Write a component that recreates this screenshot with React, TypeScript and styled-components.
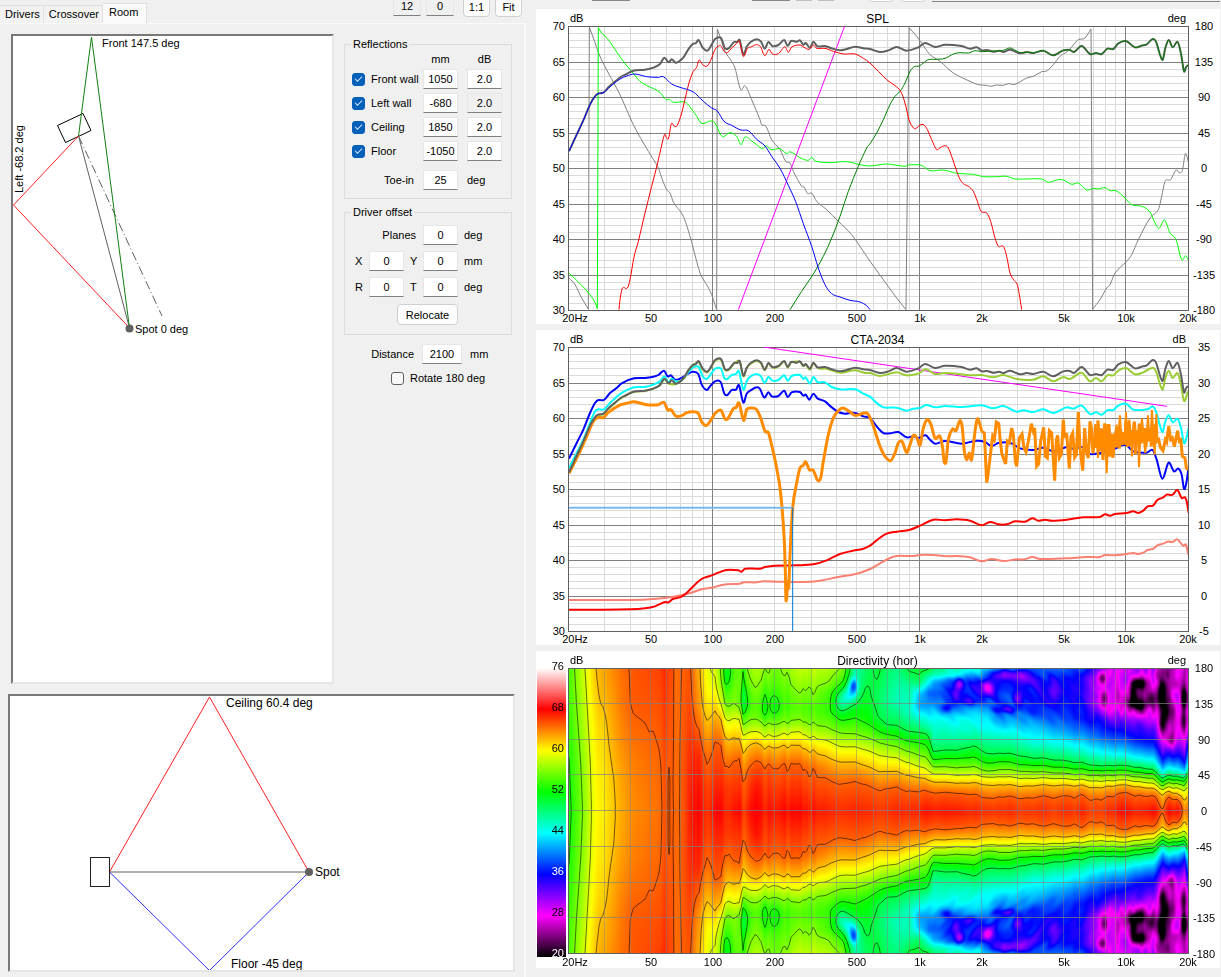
import React, { useLayoutEffect, useMemo, useRef } from "react";
import styled, { createGlobalStyle } from "styled-components";

/* ------------------------------------------------------------------ */
/* Styles                                                              */
/* ------------------------------------------------------------------ */

const GlobalStyle = createGlobalStyle`
  *, *::before, *::after { box-sizing: border-box; }
  body {
    margin: 0;
    background: #f0f0f0;
    color: #000;
    font: 11px/14px "Liberation Sans", Arial, sans-serif;
  }
  input, button { font: inherit; color: inherit; }
`;

const Page = styled.div`
  display: flex;
  align-items: flex-start;
  gap: 10px;
  padding-right: 1px;
`;

const ControlPane = styled.section`
  flex: 0 1 526px;
  min-width: 440px;
`;

const HeaderRow = styled.div`
  display: flex;
  justify-content: space-between;
  height: 23px;
`;

const TabList = styled.div`
  display: flex;
  align-items: flex-end;
`;

const Tab = styled.button<{ $active?: boolean }>`
  height: ${(p) => (p.$active ? 21 : 18)}px;
  padding: ${(p) => (p.$active ? "0 8px 4px 6px" : "0 3px 2px 5px")};
  margin-bottom: ${(p) => (p.$active ? -1 : 0)}px;
  border: 1px solid #e0e0e0;
  border-bottom: 0;
  border-left-width: 0;
  background: ${(p) => (p.$active ? "#fafafa" : "#f2f2f2")};
`;

const ZoomTools = styled.div`
  display: flex;
  align-items: flex-start;
  margin-top: -4px;
  padding-right: 4px;
  overflow: hidden;
`;

const ToolPair = styled.div`
  display: flex;
  gap: 5px;
  margin-left: 9px;
`;

const Field = styled.input<{ $width?: number; $muted?: boolean }>`
  width: ${(p) => p.$width ?? 35}px;
  height: 20px;
  padding: 0;
  text-align: center;
  border: 1px solid #e6e6e6;
  border-bottom-color: #808080;
  border-radius: 0;
  background: ${(p) => (p.$muted ? "#f0f0f0" : "#fff")};
`;

const PushButton = styled.button<{ $width: number }>`
  width: ${(p) => p.$width}px;
  height: 21px;
  padding: 0;
  border: 1px solid #d0d0d0;
  border-radius: 4px;
  background: #fdfdfd;
`;

const TabPanel = styled.div`
  padding: 10px 9px 5px 8px;
  border-top: 1px solid #fafafa;
  border-right: 2px solid #fafafa;
`;

const RoomRow = styled.div`
  display: flex;
  align-items: flex-start;
  gap: 10px;
  padding: 0 3px 10px;
`;

const Frame = styled.div`
  flex: 1;
  min-width: 0;
  border: 2px solid;
  border-color: #787878 #e6e6e6 #e6e6e6 #787878;
  background: #fff;
`;

const Drawing = styled.svg`
  display: block;
  width: 100%;
  height: auto;
  font-family: "Liberation Sans", Arial, sans-serif;
`;

const Settings = styled.form`
  flex: 0 0 168px;
  padding-top: 3px;
`;

const Group = styled.fieldset`
  margin: 0 0 6px;
  padding: 0 0 6px 7px;
  border: 1px solid #dcdcdc;
`;

const GroupTitle = styled.legend`
  margin-left: -1px;
  padding: 0 2px;
`;

const WallRow = styled.div`
  display: grid;
  grid-template-columns: 62px 35px 35px;
  column-gap: 9px;
  align-items: center;
  height: 24px;
`;

const WallHeader = styled(WallRow)`
  height: 16px;
  text-align: center;
`;

const ToeRow = styled(WallRow)`
  margin-top: 5px;
`;

const RightLabel = styled.label`
  text-align: right;
`;

const CheckLabel = styled.label`
  display: flex;
  align-items: center;
  gap: 6px;
  white-space: nowrap;
`;

const CheckBox = styled.input`
  appearance: none;
  display: grid;
  place-items: center;
  flex: none;
  width: 13px;
  height: 13px;
  margin: 0;
  border: 1px solid #606060;
  border-radius: 3px;
  background: #f8f8f8;
  &:checked {
    border-color: #005fb8;
    background: #005fb8;
  }
  &:checked::after {
    content: "";
    width: 7px;
    height: 4px;
    margin-top: -2px;
    border: solid #d0e4f8;
    border-width: 0 0 1px 1px;
    transform: rotate(-45deg);
  }
`;

const OffsetRow = styled.div`
  display: grid;
  grid-template-columns: 17px 35px 19px 35px auto;
  align-items: center;
  height: 26px;
`;

const OffsetLabel = styled.label`
  padding-left: 3px;
`;

const AxisLabel = styled.label`
  padding-left: 6px;
`;

const PlanesLabel = styled(RightLabel)`
  grid-column: span 3;
  padding-right: 7px;
`;

const Unit = styled.span`
  padding-left: 6px;
`;

const OffsetBody = styled.div`
  padding: 3px 0;
`;

const ButtonLine = styled.div`
  padding: 4px 0 0 45px;
`;

const DistanceRow = styled.div`
  display: grid;
  grid-template-columns: 70px 40px auto;
  column-gap: 8px;
  align-items: center;
  margin-top: 9px;
`;

const RotateRow = styled.div`
  padding: 7px 0 0 47px;
`;

const ChartPane = styled.main`
  flex: 1;
  min-width: 0;
  display: flex;
  flex-direction: column;
  gap: 6px;
`;

const ToolbarEdge = styled.div`
  display: flex;
  align-items: flex-start;
  gap: 6px;
  height: 3px;
  overflow: hidden;
  padding-left: 56px;
`;

const EdgeLine = styled.span<{ $width: number; $light?: boolean }>`
  flex: 0 0 ${(p) => p.$width}px;
  height: 1px;
  background: ${(p) => (p.$light ? "#c0c0c0" : "#888")};
`;

const EdgeSpace = styled.span<{ $width: number }>`
  flex: 0 0 ${(p) => p.$width}px;
`;

const EdgeButton = styled.span`
  flex: 0 0 26px;
  height: 12px;
  margin-top: -10px;
  border: 1px solid #d0d0d0;
  border-radius: 4px;
  background: #fdfdfd;
`;

const EdgeRule = styled(EdgeLine)`
  flex: 1;
  margin-top: 1px;
`;

const ChartCard = styled.figure`
  margin: 0;
  background: #fff;
`;

const HeatCanvas = styled.canvas`
  display: block;
  width: 100%;
  height: 100%;
`;

/* ------------------------------------------------------------------ */
/* Traces. A plot is 1857 x 852 trace units; the left edge is x = 117. */
/* Each trace has a low band and a high band that starts at x = 1020.  */
/* ------------------------------------------------------------------ */

type Pt = [number, number];

const X0 = 117;
const HIGH = 1020;

const parse = (s: string, dx = 0): Pt[] =>
  s
    .trim()
    .split(/\s+/)
    .filter(Boolean)
    .map((p) => {
      const [x, y] = p.split(",").map(Number);
      return [x + dx, y] as Pt;
    });

const trace = (low: string, high = ""): Pt[] => [...parse(low), ...parse(high, HIGH)];

const smooth = (pts: Pt[]): string => {
  let d = `M${pts[0][0]},${pts[0][1]}`;
  for (let i = 0; i < pts.length - 1; i++) {
    const a = pts[Math.max(0, i - 1)];
    const b = pts[i];
    const c = pts[i + 1];
    const e = pts[Math.min(pts.length - 1, i + 2)];
    const k = (c[0] - b[0]) / 3;
    const mb = c[0] === a[0] ? 0 : (c[1] - a[1]) / (c[0] - a[0]);
    const mc = e[0] === b[0] ? 0 : (e[1] - b[1]) / (e[0] - b[0]);
    d += `C${(b[0] + k).toFixed(1)},${(b[1] + mb * k).toFixed(1)} ${(c[0] - k).toFixed(1)},${(c[1] - mc * k).toFixed(1)} ${c[0]},${c[1]}`;
  }
  return d;
};

const sharp = (pts: Pt[]): string => "M" + pts.map((p) => p.join(",")).join("L");

const TOTAL = trace(
  "117,455 140,405 160,362 180,315 192,294 204,282 220,279 235,263 250,250 272,232 290,223 310,213 345,210 370,204 390,193 403,174 416,188 425,179 437,189 450,183 462,171 475,149 488,133 498,130 506,121 518,144 532,153 545,135 555,118 573,115 585,146 597,145 612,127 622,127 629,121 640,165 650,141 662,127 680,119 693,126 704,147 715,127 727,139 745,136 763,121 773,139 783,124 800,126 810,122 820,135 827,130 840,144 850,126 862,140 885,139 905,146 930,152 950,148 975,141 1000,146",
  "0,148 30,157 55,152 80,142 110,153 145,143 165,130 195,142 225,135 275,139 300,147 320,143 335,152 350,151 370,156 388,153 400,157 420,150 450,161 470,157 490,160 520,153 550,167 580,152 600,151 612,157 635,139 660,163 678,160 695,163 712,147 730,148 745,131 768,124 795,143 815,138 830,134 848,118 858,126 877,181 886,145 896,121 908,143 923,127 933,162 942,215 948,203 954,196"
);

const WOOFER = trace(
  "117,455 140,405 160,362 180,315 192,294 204,282 220,279 235,266 250,253 270,238 290,229 315,223 350,231 385,233 400,231 425,253 450,263 490,277 520,305 545,325 562,334 582,365 605,377 632,391 655,393 680,419 705,439 725,470 750,506 775,557 797,606 820,672 845,740 865,805 885,855 905,882 930,892 960,902 990,907 1010,918 1020,930"
);

const MID = trace(
  "267,930 270,900 277,866 292,865 300,840 312,772 325,725 345,640 365,560 383,490 393,445 404,404 410,416 416,415 424,372 433,380 442,377 455,340 468,285 480,240 490,215 500,203 507,181 518,195 532,199 545,175 556,148 572,138 582,155 592,159 605,145 618,133 628,124 634,150 641,171 652,147 665,141 680,135 692,142 704,168 717,149 727,163 745,162 765,141 775,158 785,142 810,136 822,143 838,149 850,136 860,146 885,146 910,155 940,163 975,163 1000,176",
  "0,190 25,215 50,240 75,258 92,275 105,310 117,360 128,382 137,387 150,376 162,376 172,390 185,420 200,450 210,444 225,438 235,445 245,470 257,505 268,535 280,552 295,560 310,575 322,605 333,635 350,640 362,665 375,715 385,740 400,740 410,770 420,820 432,842 442,855 448,885 455,930"
);

const TWEETER = trace(
  "780,930 815,875 850,823 880,770 905,715 930,650 955,575 985,500 1010,445",
  "0,432 20,400 40,360 60,315 75,290 90,275 105,250 120,215 133,201 148,199 160,190 175,180 195,179 225,176 250,163 270,159 295,160 315,153 335,156 370,154 400,152 420,145 438,153 450,159 470,157 490,160 520,153 550,167 580,152 600,151 612,157 635,139 660,163 678,160 695,163 712,147 730,148 745,131 768,124 795,143 815,138 830,134 848,118 858,126 877,181 886,145 896,121 908,143 923,127 933,162 942,215 948,203 954,196"
);

const GREEN_PHASE = [
  trace("117,820 140,842 160,862 180,885 195,908 202,927"),
  trace(
    "205,84 215,100 235,120 260,157 285,192 305,215 330,245 360,262 390,278 408,300 418,299 430,308 465,307 480,322 500,350 513,370 525,370 540,364 555,370 570,402 580,411 600,399 620,410 633,435 645,412 665,424 680,435 697,447 710,438 722,450 750,447 770,462 780,456 812,475 835,482 845,473 855,484 900,489 950,486 990,495",
    "0,499 50,493 105,500 115,496 155,497 180,513 220,511 260,521 310,524 340,531 380,531 410,530 435,538 515,538 535,548 560,541 580,541 605,554 625,550 650,571 670,566 685,568 705,564 720,573 738,573 765,595 785,615 815,620 840,637 855,670 867,686 884,661 900,700 918,720 935,780 947,768 955,781"
  ),
];

const GREY_PHASE = [
  trace("117,835 135,855 155,895 175,928"),
  trace(
    "178,82 190,115 210,170 235,220 270,285 310,375 355,455 385,505 397,540 410,570 420,580 430,607 460,650 480,710 500,785 512,825 530,855 545,885 555,915 560,930"
  ),
  trace(
    "562,88 575,125 585,155 605,185 615,205 632,270 645,258 665,300 690,360 695,375 708,380 725,420 750,450 767,485 780,490 790,515 815,560 822,562 833,582 845,580 860,605 890,630 925,665 965,705 1010,770",
    "0,785 40,840 80,895 108,930"
  ),
  trace(
    "",
    "117,84 140,110 165,145 180,165 210,185 250,220 300,245 325,255 350,257 362,260 380,256 400,257 415,252 435,254 470,235 490,230 515,216 530,214 550,195 570,170 585,160 600,148 615,130 625,120 645,115 663,88"
  ),
  trace(
    "",
    "668,928 690,900 710,865 720,855 735,820 770,785 785,765 805,720 840,655 865,630 875,590 885,545 895,541 902,540 918,511 926,518 937,513 946,462 955,485"
  ),
];

const LISTENING = trace(
  "117,445 140,395 160,352 180,305 192,284 204,271 220,269 235,253 272,221 310,202 345,199 390,182 403,163 416,177 437,178 462,160 475,137 488,123 506,112 518,134 532,143 545,125 555,108 573,105 585,136 597,135 612,117 629,111 640,155 650,131 662,117 680,109 693,116 704,137 715,117 727,129 745,126 763,111 773,129 783,114 810,112 820,125 827,120 840,135 850,117 865,131 890,132 930,144 975,137 1005,145",
  "0,145 30,154 80,143 110,152 145,147 168,134 195,148 225,145 275,149 300,152 335,151 370,158 400,151 440,163 490,165 520,155 550,170 580,157 600,163 635,144 660,170 678,160 695,170 712,152 730,152 745,138 768,130 795,149 820,143 848,129 858,140 877,195 886,160 896,138 908,160 923,146 933,180 942,229 954,200"
);

const EARLY = trace(
  "117,430 140,385 160,345 180,295 195,260 205,254 222,254 240,235 272,207 312,188 345,187 370,180 390,170 403,155 415,172 425,163 437,170 450,170 462,160 475,143 490,128 506,127 518,155 530,163 545,145 555,132 573,132 583,160 592,163 605,151 618,148 627,140 640,195 650,170 662,155 680,148 693,155 704,175 715,157 727,168 745,166 763,152 773,168 785,154 810,151 820,163 827,158 840,177 850,157 862,172 885,173 905,187 930,194 975,194 1000,207",
  "0,216 20,235 40,248 80,249 110,258 130,252 150,250 168,241 195,248 225,244 275,247 335,242 370,251 400,244 440,261 460,257 490,262 520,254 550,265 590,248 610,252 635,243 660,268 678,263 695,270 712,257 730,256 745,243 768,237 790,255 835,253 848,245 858,260 877,322 886,290 896,272 908,293 923,283 933,310 942,355 948,345 956,310"
);

const POWER = trace(
  "117,402 140,355 160,315 180,265 195,235 205,226 222,226 240,205 260,190 275,176 312,161 345,160 370,156 385,151 402,138 413,155 423,152 435,165 450,162 475,147 488,141 505,148 515,180 530,196 540,185 555,170 572,172 583,207 592,211 605,196 618,195 627,182 640,234 650,207 662,197 680,188 690,193 703,219 715,203 725,215 745,214 763,198 773,217 785,203 810,202 820,213 827,210 838,225 850,207 862,221 885,230 905,248 925,262 945,267 965,264 980,266 1000,275",
  "0,280 20,305 40,325 60,326 85,322 110,338 130,335 145,340 167,332 180,345 195,357 225,349 275,357 320,348 345,352 365,364 385,355 420,354 450,371 490,376 520,369 550,380 590,367 610,372 640,368 655,387 690,385 712,378 740,370 755,362 770,362 790,380 830,384 848,376 860,405 877,462 896,414 912,440 925,432 935,450 942,492 948,480 955,435"
);

const hash = (n: number): number => {
  const s = Math.sin(n * 127.1 + 11.7) * 43758.5453;
  return s - Math.floor(s);
};

/* Above 6 kHz the comb filtering is denser than the plot can resolve. */
const combPoints = (): Pt[] => {
  const pts: Pt[] = [];
  let up = true;
  let i = 0;
  for (let x = 664; x < 864; x += x < 740 ? 5 : 4) {
    const mid = 354 - (x - 664) * 0.12;
    const swing = 16 + 56 * hash(i) * hash(i + 500);
    pts.push([x + HIGH, Math.round(mid + (up ? -swing : swing))]);
    up = !up;
    i++;
  }
  return pts;
};

const ROOM_RESPONSE_LOW = trace(
  "117,446 150,380 170,335 190,290 204,278 220,279 235,263 272,240 290,236 312,231 350,240 385,240 402,233 413,256 423,255 437,274 455,273 470,264 487,261 505,266 515,292 530,302 548,278 555,266 573,257 585,283 595,280 610,252 618,249 627,235 641,287 650,255 665,250 680,255 692,280 705,320 715,324 727,370 740,430 750,490 757,560 763,650 766,740 768,828 774,770 776,790 780,690 788,550 800,475 810,430 820,422 827,411 838,435 850,437 863,467 872,460 880,410 895,330 910,280 925,258 938,250 955,258 975,272 1000,266 1012,266",
  "5,290 15,320 30,365 45,395 62,408 75,385 85,355 97,352 110,384 120,360 130,332 142,342 150,362 160,310 172,285 183,300 195,340 210,335 218,370 222,410 228,410 235,345 248,313 258,318 270,288 277,310 283,380 290,405 298,385 305,405 315,320 322,283 330,300 335,320"
);

const ROOM_RESPONSE_HIGH: Pt[] = [
  ...trace(
    "",
    "335,320 343,325 350,474 354,450 360,400 368,335 373,345 379,292 386,296 391,350 396,390 407,418 412,350 418,355 425,310 430,330 436,410 440,425 448,340 456,328 462,370 468,382 475,350 484,297 490,320 494,310 500,425 506,418 512,350 521,308 526,395 532,400 538,318 545,325 549,390 554,468 559,345 563,332 568,400 574,390 580,285 584,340 590,325 598,432 603,335 608,325 614,398 619,390 625,262 630,370 638,438 644,310 649,380 655,400 660,290"
  ),
  ...combPoints(),
  ...trace(
    "",
    "866,345 872,370 879,378 886,345 890,352 896,305 902,345 907,340 913,366 918,340 923,318 928,355 932,340 937,395 945,400 949,430 954,435"
  ),
];

const COMB_PEAKS = sharp(
  trace(
    "",
    "672,345 676,298 680,345 684,400 688,345 706,345 710,446 714,345 718,298 722,345 728,400 732,345 740,300 744,345 750,272 753,330 765,330 768,262 771,330 778,285 782,330 786,395 789,330 794,290 798,330 804,330 807,428 811,330 816,282 820,330 826,385 830,330 834,272 837,330 842,330 846,256 850,330 854,390 856,330 859,268 862,340"
  )
);

const DI_RED = trace(
  "117,855 190,855 300,854 345,851 375,845 405,832 415,833 428,823 455,816 475,800 500,775 515,763 530,757 545,752 565,744 590,736 625,737 635,741 645,732 690,732 705,727 735,723 800,722 850,719 890,707 930,688 965,679 1000,672",
  "0,663 25,643 50,627 80,621 120,615 150,603 190,585 225,587 260,584 300,588 335,602 360,592 385,599 410,599 435,590 465,591 487,581 505,588 525,585 545,588 590,585 640,578 690,577 705,569 720,573 735,568 770,565 790,560 805,565 820,558 832,546 850,542 862,526 880,518 890,510 908,510 922,496 935,520 945,518 950,530 956,565"
);

const DI_SALMON = trace(
  "117,826 300,826 380,822 430,816 470,808 515,794 550,788 580,780 630,777 642,773 680,773 700,770 740,771 820,772 870,768 920,758 980,747",
  "0,733 30,716 60,700 80,694 130,694 160,690 190,691 230,695 260,694 300,698 335,710 365,703 400,709 440,704 465,704 487,697 510,703 590,701 650,697 690,697 705,691 730,692 770,688 790,685 805,688 822,683 832,676 850,672 862,662 880,657 892,651 908,652 922,644 940,664 948,660 955,690"
);

/* ------------------------------------------------------------------ */
/* Shared plot geometry                                                */
/* ------------------------------------------------------------------ */

const CARD_W = 684;
const PLOT_X = 33;
const PLOT_Y = 17;
const PLOT_W = 619;
const PLOT_H = 284;
const HEAT_H = 286;

const freqX = (f: number) => Math.round((Math.log10(f / 20) / 3) * PLOT_W);

const MINOR_FREQS = [
  30, 40, 50, 60, 70, 80, 90, 200, 300, 400, 500, 600, 700, 800, 900, 2000, 3000, 4000, 5000, 6000, 7000, 8000, 9000,
];
const MAJOR_FREQS = [100, 1000, 10000];
const FREQ_TICKS: [number, string][] = [
  [50, "50"],
  [100, "100"],
  [200, "200"],
  [500, "500"],
  [1000, "1k"],
  [2000, "2k"],
  [5000, "5k"],
  [10000, "10k"],
  [20000, "20k"],
];

const FreqLabels = ({ y }: { y: number }) => (
  <g fontSize="11" textAnchor="middle">
    <text x={PLOT_X + 6} y={y}>20Hz</text>
    {FREQ_TICKS.map(([f, label]) => (
      <text key={f} x={PLOT_X + freqX(f)} y={y}>{label}</text>
    ))}
  </g>
);

const Caption = ({ title, right }: { title: string; right: string }) => (
  <g fontSize="11">
    <text x={PLOT_X + 1} y="13">dB</text>
    <text x={PLOT_X + PLOT_W / 2 - 1} y="14" fontSize="12" textAnchor="middle">{title}</text>
    <text x={PLOT_X + PLOT_W - 2} y="13" textAnchor="end">{right}</text>
  </g>
);

const Grid = () => {
  const rows = Array.from({ length: 41 }, (_, i) => i);
  const rowY = (i: number) => Math.round((i * PLOT_H) / 40) + 0.5;
  return (
    <g strokeWidth="1" shapeRendering="crispEdges" transform={`translate(${PLOT_X} ${PLOT_Y})`}>
      <g stroke="#dadada">
        {rows.filter((i) => i % 5).map((i) => <path key={i} d={`M0,${rowY(i)}H${PLOT_W}`} />)}
        {MINOR_FREQS.map((f) => <path key={f} d={`M${freqX(f) - 0.5},0V${PLOT_H}`} />)}
      </g>
      <g stroke="#808080">
        {rows.filter((i) => i % 5 === 0).map((i) => <path key={i} d={`M0,${rowY(i)}H${PLOT_W}`} />)}
        {MAJOR_FREQS.map((f) => <path key={f} d={`M${freqX(f) - 0.5},0V${PLOT_H}`} />)}
      </g>
      <rect x="-0.5" y="0.5" width={PLOT_W + 1} height={PLOT_H} fill="none" stroke="#606060" />
    </g>
  );
};

interface CurveProps {
  d: string;
  color: string;
  width?: number;
}

const Curve = ({ d, color, width = 1 }: CurveProps) => (
  <path d={d} fill="none" stroke={color} strokeWidth={width} vectorEffect="non-scaling-stroke" />
);

interface LineChartProps {
  title: string;
  unit: string;
  ticks: number[];
  originY: number;
  children: React.ReactNode;
}

const LineChart = ({ title, unit, ticks, originY, children }: LineChartProps) => (
  <ChartCard>
    <Drawing viewBox={`0 0 ${CARD_W} 315`} role="img" aria-label={title}>
      <Grid />
      <svg x={PLOT_X} y={PLOT_Y} width={PLOT_W} height={PLOT_H} viewBox={`${X0} ${originY} 1857 852`} preserveAspectRatio="none">
        {children}
      </svg>
      <Caption title={title} right={unit} />
      <g fontSize="11">
        {ticks.map((t, i) => {
          const y = PLOT_Y + Math.round((i * PLOT_H) / 8) + 4;
          return (
            <React.Fragment key={t}>
              <text x="29" y={y} textAnchor="end">{70 - i * 5}</text>
              <text x="668" y={y} textAnchor="middle">{t}</text>
            </React.Fragment>
          );
        })}
      </g>
      <FreqLabels y={313} />
    </Drawing>
  </ChartCard>
);

/* ------------------------------------------------------------------ */
/* Directivity map                                                     */
/* ------------------------------------------------------------------ */

/* Polar samples: plot x, then angle:level pairs. */
const POLAR: [number, string][] = [
  [0, "0:52.4 60:52.9 90:53.3 135:54 180:54.4"],
  [14, "0:56.1 60:56.6 120:57.5 180:58.4"],
  [24, "0:59.4 60:59.7 110:60.3 135:60.7 180:61.3"],
  [33, "0:60.4 60:60.8 110:61.4 135:62.1 180:62.7"],
  [45, "0:61.8 40:62 80:62.6 135:63.3 180:63.8"],
  [60, "0:63.3 60:63.7 110:64.5 135:64.9 180:65"],
  [80, "0:64.2 60:64.6 100:65 130:65.4 180:65.8"],
  [93, "0:65 60:65.2 130:65.9 180:66.4"],
  [100, "0:64.9 40:64.9 70:65.1 130:65.5 180:65.9"],
  [106, "0:64.8 40:64.7 90:64.7 180:64.6"],
  [113, "0:65.3 60:65.3 120:65.2 180:65.1"],
  [120, "0:67 60:66.6 110:66 150:65.6 180:65.4"],
  [129, "0:68 70:66.8 105:65 130:63.6 180:62.6"],
  [136, "0:66.7 30:66.3 69:65 120:62 150:60.6 180:60.2"],
  [146, "0:67.9 88:65 126:62 155:59.6 180:58.6"],
  [151, "0:68 85:65 118:62 137:59 160:57 180:56.4"],
  [157, "0:66.8 30:66.4 58:65 92:62 115:59 132:56 160:53 180:52"],
  [166, "0:67.6 64:65 92:62 117:59 135:56 180:54.8"],
  [171, "0:67.8 66:65 90:62 116:59 134:56 180:54.8"],
  [174, "0:66 30:65.2 38:65 73:62 96:59 109:56 125:53 145:51.8 180:53.2"],
  [178, "0:67 50:65 80:62 98:59 112:56 130:54 150:54.5 180:56"],
  [186, "0:68.1 30:67.4 63:65 86:62 100:59 115:56 130:54.6 150:55.7 180:57.4"],
  [196, "0:66.8 54:65 78:62 93:59 107:56 122:53.2 145:53 165:55 180:56"],
  [206, "0:67.4 54:65 80:62 94:59 109:56 125:53.2 142:53.2 160:54.5 180:55.4"],
  [216, "0:67.9 60:65 83:62 98:59 112:56 130:54.2 150:54.8 180:56.6"],
  [228, "0:67.9 60:65 83:62 100:59 114:56 130:54.6 151:56 180:58"],
  [245, "0:67.6 54:65 77:62 94:59 111:56 130:54.6 146:56 180:58.4"],
  [260, "0:67 40:65 67:62 88:59 104:56 125:53.4 150:54 163:56 180:57.5"],
  [273, "0:66.7 35:65 62:62 81:59 98:56 114:53 128:50.6 145:50.4 165:54 180:56"],
  [286, "0:67 38:65 62:62 81:59 97:56 117:53 140:50 160:47.5 180:46.5"],
  [297, "0:66.8 34:65 57:62 77:59 93:56 113:52.6 140:50.8 180:49"],
  [309, "0:66.4 27:65 50:62 71:59 87:56 101:53 118:50 145:49 165:50 180:50.6"],
  [317, "0:66.6 29:65 50:62 69:59 84:56 97:53 108:50 140:47.6 180:49"],
  [328, "0:67 31:65 50:62 67:59 81:56 94:53 107:50 140:46 180:48"],
  [340, "0:67 26:65 45:62 61:59 75:56 88:53 100:50 125:46 155:47 180:50.6"],
  [350, "0:67 25:65 42:62 56:59 70:56 86:53 99:50 115:46 133:41 148:42 163:49 180:51"],
  [359, "0:67.6 25:65 39:62 51:59 65:56 80:53 96:50 108:46 118:44 135:40 150:39 163:44 180:50.4"],
  [364, "0:67.4 24:65 37:62 47:59 56:56 65:53 75:50 92:47 115:44.6 135:40 150:38 163:41 172:46 180:49"],
  [388, "0:67.3 23:65 35:62 45:59 54:56 66:53 76:50 92:47 117:44 130:40 150:36 165:36 172:43 180:46"],
  [404, "0:67 22:65 36:62 46:59 56:56 68:53 82:50 100:46 117:44.5 130:41 147:36 160:36 170:42 180:44"],
  [418, "0:66.7 17:65 33:62 43:59 50:56 60:53 72:50 96:46 121:42.5 138:38 157:34 172:38 180:43"],
  [434, "0:66.6 18:65 33:62 43:59 52:56 62:53 72:50 100:44.6 117:40.6 130:37 147:38 163:36 171:29 176:33 180:40"],
  [451, "0:66.3 16:65 31:62 41:59 50:56 58:53 69:50 88:46 109:41.8 125:39 142:35 155:37 170:30 176:34 180:41"],
  [465, "0:66.5 17:65 32:62 41:59 49:56 57:53 66:50 86:45 105:42 125:38 145:37 165:34 180:40"],
  [484, "0:66.2 17:65 32:62 41:59 48:56 55:53 64:50 84:45 100:41.6 117:38.6 134:36 150:35 165:36 180:39.5"],
  [511, "0:67 21:65 33:62 40:59 46:56 53:53 61:50 79:45 98:40.5 117:36.8 148:35.5 168:36 180:38.5"],
  [528, "0:66.3 16:65 30:62 38:59 45:56 51:53 57:50 73:45 94:39.6 113:36 130:31.5 147:31 168:31 180:34"],
  [541, "0:66.9 19:65 32:62 38:59 45:56 51:53 57:50 72:44.4 92:38.6 113:34 125:29 145:27 160:29 180:27"],
  [558, "0:67.8 24:65 33:62 39:59 45:56 51:53 57:50 71:44 92:37.6 111:33 123:29 142:27 163:30 180:30"],
  [570, "0:67.2 21:65 31:62 37:59 43:56 49:53 55:50 68:44 88:37 105:34 122:28 140:25 148:26 160:25 172:29 180:31"],
  [584, "0:68 20:65 29:62 35:59 41:56 47:53 52:50 65:44 84:37 104:33 122:28 140:25 165:28 180:30"],
  [593, "0:65.2 20:62 27:59 31:56 36:53 41:50 50:44 62:38 75:33 92:28 111:26 125:24 150:23 168:26 180:25"],
  [603, "0:67.6 16:65 23:62 29:59 35:56 39:53 44:50 54:44 69:36 84:30 96:26 117:25 147:27 165:28 180:27"],
  [610, "0:67.4 13:65 20:62 28:59 34:56 38:53 43:50 53:43 69:36 88:30 117:28 150:28 180:27"],
  [615, "0:64 12:62 25:59 31:56 37:53 41:50 50:43 62:36 80:30 100:26 125:24 150:24 168:26 180:26"],
  [619, "0:65 20:62 33:59 41:56 46:53 50:50 62:44 80:38 98:31 125:27 180:28"],
];

/* Local notches: x, angle, depth in dB, width in px, width in degrees. */
const NOTCHES: [number, number, number, number, number][] = [
  [284, 158, 9, 3, 7],
  [280, 147, 5, 5, 8],
  [272, 138, 3, 5, 8],
  [157, 172, 1, 4, 8],
  [175, 140, 2, 4, 12],
  [195, 130, 1, 3, 9],
  [206, 133, 1, 4, 9],
  [390, 160, 7, 3, 5],
  [386, 145, 4, 3, 7],
  [377, 130, 5, 4, 4],
  [400, 138, 3, 8, 3],
  [418, 155, 6, 4, 7],
  [436, 128, 4, 8, 3],
  [448, 142, 4, 3, 7],
  [484, 150, 3, 4, 10],
  [533, 168, 7, 3, 6],
  [534, 140, 5, 3, 8],
  [545, 130, 2, 4, 5],
  [562, 136, 5, 4, 5],
  [570, 133, 6, 5, 5],
  [563, 150, 6, 3, 9],
  [568, 162, 6, 5, 4],
  [573, 160, 3, 2, 6],
  [581, 142, 5, 3, 8],
  [593, 150, 6, 4, 12],
  [596, 125, 6, 4, 12],
  [593, 108, 4, 3, 8],
  [601, 88, 5, 3, 6],
  [588, 172, 3, 3, 6],
  [598, 173, 3, 2, 6],
  [614, 140, 6, 2, 14],
  [613, 112, 4, 2, 8],
];

const toPlot = (pts: Pt[]): Pt[] => pts.map(([x, y]) => [(x - X0) / 3, 70 - (y - 79) / 21.3]);

const lerpTable = (pts: Pt[], x: number): number => {
  if (x <= pts[0][0]) return pts[0][1];
  for (let i = 1; i < pts.length; i++) {
    if (x <= pts[i][0]) {
      const [ax, ay] = pts[i - 1];
      const [bx, by] = pts[i];
      return ay + ((by - ay) * (x - ax)) / (bx - ax);
    }
  }
  return pts[pts.length - 1][1];
};

const valueNoise = (x: number, y: number): number => {
  const xi = Math.floor(x);
  const yi = Math.floor(y);
  const fx = x - xi;
  const fy = y - yi;
  const sx = fx * fx * (3 - 2 * fx);
  const sy = fy * fy * (3 - 2 * fy);
  const h = (a: number, b: number) => hash(a * 1.37 + b * 31.7);
  const top = h(xi, yi) * (1 - sx) + h(xi + 1, yi) * sx;
  const bottom = h(xi, yi + 1) * (1 - sx) + h(xi + 1, yi + 1) * sx;
  return (top * (1 - sy) + bottom * sy) * 2 - 1;
};

const ramp = (x: number, a: number, b: number) => {
  const t = Math.min(1, Math.max(0, (x - a) / (b - a)));
  return t * t * (3 - 2 * t);
};

/* Level in dB for every plot pixel of the 0..180 degree half. */
const buildField = (): number[][] => {
  const onAxis = toPlot(TOTAL);
  const drops = POLAR.map(([x, pairs]) => {
    const table = pairs.split(" ").map((p) => p.split(":").map(Number) as Pt);
    const axis = lerpTable(onAxis, x);
    const raw = Array.from({ length: 181 }, (_, a) => axis - lerpTable(table, a));
    raw[0] = 0;
    return raw.map((_, a) => {
      let sum = 0;
      for (let k = -3; k <= 3; k++) sum += raw[Math.min(180, Math.abs(a + k))];
      return sum / 7;
    });
  });
  const half = HEAT_H / 2;
  const field: number[][] = [];
  for (let x = 0; x <= PLOT_W; x++) {
    let c = 0;
    while (c < POLAR.length - 2 && POLAR[c + 1][0] <= x) c++;
    const t = (x - POLAR[c][0]) / (POLAR[c + 1][0] - POLAR[c][0]);
    const axis = lerpTable(onAxis, x);
    const near = NOTCHES.filter((n) => Math.abs(n[0] - x) < n[3] * 3);
    const column: number[] = [];
    for (let r = 0; r <= half; r++) {
      const a = (r / half) * 180;
      const ai = Math.min(179, Math.floor(a));
      const f = a - ai;
      const d0 = drops[c][ai] * (1 - f) + drops[c][ai + 1] * f;
      const d1 = drops[c + 1][ai] * (1 - f) + drops[c + 1][ai + 1] * f;
      let v = axis - (d0 * (1 - t) + d1 * t);
      for (const [nx, na, depth, wx, wa] of near) {
        v -= depth * Math.exp(-(((x - nx) / wx) ** 2 + ((a - na) / wa) ** 2) / 2);
      }
      const rough = ramp(x, 345, 380) * ramp(a, 85, 135) * (1 - 0.6 * ramp(x, 470, 500));
      const edge = ramp(x, 515, 545) * ramp(a, 90, 130);
      v += rough * 1.9 * valueNoise((x + a / 2) / 7, a / 14) + edge * 2.4 * valueNoise(x / 4 + 50, a / 18);
      column.push(v);
    }
    field.push(column);
  }
  return field;
};

const STOPS: [number, number[]][] = [
  [20, [0, 0, 0]],
  [28, [255, 0, 255]],
  [36, [0, 0, 255]],
  [44, [0, 255, 255]],
  [52, [0, 255, 0]],
  [60, [255, 255, 0]],
  [68, [255, 0, 0]],
  [76, [255, 255, 255]],
];

const levelColor = (v: number): number[] => {
  const c = Math.min(75.99, Math.max(20, v));
  const i = Math.floor((c - 20) / 8);
  const t = (c - 20) / 8 - i;
  return STOPS[i][1].map((ch, k) => ch + (STOPS[i + 1][1][k] - ch) * t);
};

const contourPath = (field: number[][], levels: number[]): string => {
  const step = 2;
  const half = HEAT_H / 2;
  let d = "";
  for (const level of levels) {
    for (let x = 0; x + step <= PLOT_W; x += step) {
      for (let r = 0; r < half; r += step) {
        const r2 = Math.min(half, r + step);
        const corners: [number, number, number][] = [
          [x, r, field[x][r]],
          [x + step, r, field[x + step][r]],
          [x + step, r2, field[x + step][r2]],
          [x, r2, field[x][r2]],
        ];
        const hits: Pt[] = [];
        for (let k = 0; k < 4; k++) {
          const p = corners[k];
          const q = corners[(k + 1) % 4];
          if (p[2] >= level !== q[2] >= level) {
            const t = (level - p[2]) / (q[2] - p[2]);
            hits.push([p[0] + (q[0] - p[0]) * t, p[1] + (q[1] - p[1]) * t]);
          }
        }
        for (let k = 0; k + 1 < hits.length; k += 2) {
          const [ax, ay] = hits[k];
          const [bx, by] = hits[k + 1];
          d += `M${ax.toFixed(1)},${(half - ay).toFixed(1)}L${bx.toFixed(1)},${(half - by).toFixed(1)}`;
          d += `M${ax.toFixed(1)},${(half + ay).toFixed(1)}L${bx.toFixed(1)},${(half + by).toFixed(1)}`;
        }
      }
    }
  }
  return d;
};

const DirectivityChart = () => {
  const canvas = useRef<HTMLCanvasElement>(null);
  const field = useMemo(buildField, []);
  const contours = useMemo(() => contourPath(field, [50, 53, 56, 59, 62, 65]), [field]);

  useLayoutEffect(() => {
    const ctx = canvas.current?.getContext("2d");
    if (!ctx) return;
    const img = ctx.createImageData(PLOT_W, HEAT_H);
    const half = HEAT_H / 2;
    for (let y = 0; y < HEAT_H; y++) {
      const r = Math.round(Math.abs(y + 0.5 - half));
      for (let x = 0; x < PLOT_W; x++) {
        const [red, green, blue] = levelColor(field[x][r]);
        const o = (y * PLOT_W + x) * 4;
        img.data[o] = red;
        img.data[o + 1] = green;
        img.data[o + 2] = blue;
        img.data[o + 3] = 255;
      }
    }
    ctx.putImageData(img, 0, 0);
  }, [field]);

  const angles = [180, 135, 90, 45, 0, -45, -90, -135, -180];
  const levels = [76, 68, 60, 52, 44, 36, 28, 20];

  return (
    <ChartCard>
      <Drawing viewBox={`0 0 ${CARD_W} 317`} role="img" aria-label="Directivity (hor)">
        <defs>
          <linearGradient id="levels" x1="0" y1="1" x2="0" y2="0">
            {STOPS.map(([v, rgb]) => (
              <stop key={v} offset={(v - 20) / 56} stopColor={`rgb(${rgb.join(",")})`} />
            ))}
          </linearGradient>
        </defs>
        <rect x="1" y="17" width="29" height="289" fill="url(#levels)" />
        <foreignObject x={PLOT_X} y={PLOT_Y} width={PLOT_W} height={HEAT_H}>
          <HeatCanvas ref={canvas} width={PLOT_W} height={HEAT_H} />
        </foreignObject>
        <g transform={`translate(${PLOT_X} ${PLOT_Y})`} fill="none">
          <path d={contours} stroke="#000" strokeOpacity="0.55" />
          <g shapeRendering="crispEdges" stroke="#808080" strokeOpacity="0.45">
            {MINOR_FREQS.map((f) => <path key={f} d={`M${freqX(f) - 0.5},0V${HEAT_H}`} />)}
          </g>
          <g shapeRendering="crispEdges" stroke="#808080" strokeOpacity="0.7">
            {MAJOR_FREQS.map((f) => <path key={f} d={`M${freqX(f) - 0.5},0V${HEAT_H}`} />)}
            {angles.slice(1, -1).map((a, i) => (
              <path key={a} d={`M0,${Math.round(((i + 1) * HEAT_H) / 8) - 0.5}H${PLOT_W}`} />
            ))}
          </g>
          <rect x="-0.5" y="0.5" width={PLOT_W + 1} height={HEAT_H - 1} stroke="#606060" shapeRendering="crispEdges" />
        </g>
        <Caption title="Directivity (hor)" right="deg" />
        <g fontSize="11">
          {levels.map((v, i) => (
            <text key={v} x="28" y={19 + i * 41} textAnchor="end" fill={v === 36 || v === 20 ? "#fff" : "#000"}>{v}</text>
          ))}
          {angles.map((a, i) => (
            <text key={a} x="668" y={PLOT_Y + 4 + Math.round((i * HEAT_H) / 8)} textAnchor="middle">{a}</text>
          ))}
        </g>
        <FreqLabels y={315} />
      </Drawing>
    </ChartCard>
  );
};

/* ------------------------------------------------------------------ */
/* Charts                                                              */
/* ------------------------------------------------------------------ */

const SplChart = () => (
  <LineChart title="SPL" unit="deg" originY={79} ticks={[180, 135, 90, 45, 0, -45, -90, -135, -180]}>
    {GREY_PHASE.map((p, i) => <Curve key={i} d={smooth(p)} color="#808080" />)}
    <Curve d="M175,930L178,82M560,930L562,88M1128,930L1137,84M1683,88L1688,930" color="#808080" />
    {GREEN_PHASE.map((p, i) => <Curve key={i} d={smooth(p)} color="#00ff00" />)}
    <Curve d="M202,927L205,84" color="#00ff00" />
    <Curve d="M625,930L944,79" color="#ff00ff" />
    <Curve d={smooth(TOTAL)} color="#606060" width={2} />
    <Curve d={smooth(TWEETER)} color="#008000" />
    <Curve d={smooth(MID)} color="#ff0000" />
    <Curve d={smooth(WOOFER)} color="#0000ff" />
  </LineChart>
);

const CtaChart = () => (
  <LineChart title="CTA-2034" unit="dB" originY={67} ticks={[35, 30, 25, 20, 15, 10, 5, 0, -5]}>
    <Curve d={smooth(DI_SALMON)} color="#fa8072" width={2} />
    <Curve d={smooth(DI_RED)} color="#ff0000" width={2} />
    <Curve d="M700,67L1911,245" color="#ff00ff" />
    <Curve d={smooth(POWER)} color="#0000ff" width={2} />
    <Curve d={smooth(EARLY)} color="#00ffff" width={2} />
    <Curve d={smooth(LISTENING)} color="#9acd32" width={2} />
    <Curve d={smooth(ROOM_RESPONSE_LOW)} color="#ff8c00" width={3} />
    <Curve d={sharp(ROOM_RESPONSE_HIGH)} color="#ff8c00" width={3} />
    <Curve d={COMB_PEAKS} color="#ff8c00" width={2} />
    <g transform="translate(0 -12)">
      <Curve d={smooth(TOTAL)} color="#606060" width={2} />
    </g>
    <Curve d="M117,549H788" color="#78b8ec" width={2} />
    <Curve d="M788,549V919" color="#0078d7" />
  </LineChart>
);

/* ------------------------------------------------------------------ */
/* Room drawings                                                       */
/* ------------------------------------------------------------------ */

const TopView = () => (
  <Drawing viewBox="13 36 319 646" role="img" aria-label="Room, top view" fontSize="11">
    <g fill="none">
      <path d="M57.5,125.5L83,113.5L91,130.5L65.5,142.5Z" stroke="#000" />
      <path d="M78.5,136L129.5,328" stroke="#606060" />
      <path d="M78.5,136L162,316" stroke="#606060" strokeDasharray="9 3 1 3" />
      <path d="M78.5,136L91.5,37L129.5,328" stroke="#108010" />
      <path d="M78.5,136L13.5,205L129.5,328" stroke="#ff2020" />
    </g>
    <circle cx="129.5" cy="328.5" r="4" fill="#606060" />
    <text x="102" y="47">Front 147.5 deg</text>
    <text x="135" y="333">Spot 0 deg</text>
    <text transform="translate(23 193) rotate(-90)">Left -68.2 deg</text>
  </Drawing>
);

const SideView = () => (
  <Drawing viewBox="10 696 503 274" role="img" aria-label="Room, side view" fontSize="12">
    <g fill="none">
      <path d="M109.5,872H306" stroke="#b0b0b0" strokeWidth="2" />
      <path d="M109.5,872L209.5,697L309,872" stroke="#ff2020" />
      <path d="M109.5,872L209.5,970.5L309,872" stroke="#3030ff" />
      <rect x="90.5" y="857.5" width="19" height="29" stroke="#202020" />
    </g>
    <circle cx="309" cy="872" r="4" fill="#606060" />
    <text x="226" y="707">Ceiling 60.4 deg</text>
    <text x="231" y="968">Floor -45 deg</text>
    <text x="315" y="876">Spot</text>
  </Drawing>
);

/* ------------------------------------------------------------------ */
/* Settings                                                            */
/* ------------------------------------------------------------------ */

const WALLS = [
  { name: "Front wall", distance: "1050", loss: "2.0" },
  { name: "Left wall", distance: "-680", loss: "2.0", muted: true },
  { name: "Ceiling", distance: "1850", loss: "2.0" },
  { name: "Floor", distance: "-1050", loss: "2.0" },
];

const RoomSettings = () => (
  <Settings>
    <Group>
      <GroupTitle>Reflections</GroupTitle>
      <WallHeader>
        <span />
        <span>mm</span>
        <span>dB</span>
      </WallHeader>
      {WALLS.map((w) => (
        <WallRow key={w.name}>
          <CheckLabel>
            <CheckBox type="checkbox" defaultChecked />
            {w.name}
          </CheckLabel>
          <Field aria-label={`${w.name} distance`} defaultValue={w.distance} />
          <Field aria-label={`${w.name} loss`} defaultValue={w.loss} $muted={w.muted} />
        </WallRow>
      ))}
      <ToeRow>
        <RightLabel htmlFor="toe-in">Toe-in</RightLabel>
        <Field id="toe-in" defaultValue="25" />
        <span>deg</span>
      </ToeRow>
    </Group>
    <Group>
      <GroupTitle>Driver offset</GroupTitle>
      <OffsetBody>
        <OffsetRow>
          <PlanesLabel htmlFor="planes">Planes</PlanesLabel>
          <Field id="planes" defaultValue="0" />
          <Unit>deg</Unit>
        </OffsetRow>
        <OffsetRow>
          <OffsetLabel htmlFor="off-x">X</OffsetLabel>
          <Field id="off-x" defaultValue="0" />
          <AxisLabel htmlFor="off-y">Y</AxisLabel>
          <Field id="off-y" defaultValue="0" />
          <Unit>mm</Unit>
        </OffsetRow>
        <OffsetRow>
          <OffsetLabel htmlFor="off-r">R</OffsetLabel>
          <Field id="off-r" defaultValue="0" />
          <AxisLabel htmlFor="off-t">T</AxisLabel>
          <Field id="off-t" defaultValue="0" />
          <Unit>deg</Unit>
        </OffsetRow>
        <ButtonLine>
          <PushButton type="button" $width={61}>Relocate</PushButton>
        </ButtonLine>
      </OffsetBody>
    </Group>
    <DistanceRow>
      <RightLabel htmlFor="distance">Distance</RightLabel>
      <Field id="distance" defaultValue="2100" $width={40} />
      <span>mm</span>
    </DistanceRow>
    <RotateRow>
      <CheckLabel>
        <CheckBox type="checkbox" />
        Rotate 180 deg
      </CheckLabel>
    </RotateRow>
  </Settings>
);

/* ------------------------------------------------------------------ */

export default function App() {
  return (
    <Page>
      <GlobalStyle />
      <ControlPane>
        <HeaderRow>
          <TabList role="tablist">
            <Tab type="button" role="tab">Drivers</Tab>
            <Tab type="button" role="tab">Crossover</Tab>
            <Tab type="button" role="tab" aria-selected $active>Room</Tab>
          </TabList>
          <ZoomTools>
            <ToolPair>
              <Field aria-label="Azimuth" defaultValue="12" $width={28} $muted />
              <Field aria-label="Elevation" defaultValue="0" $width={28} $muted />
            </ToolPair>
            <ToolPair>
              <PushButton type="button" $width={27}>1:1</PushButton>
              <PushButton type="button" $width={27}>Fit</PushButton>
            </ToolPair>
          </ZoomTools>
        </HeaderRow>
        <TabPanel role="tabpanel">
          <RoomRow>
            <Frame>
              <TopView />
            </Frame>
            <RoomSettings />
          </RoomRow>
          <Frame>
            <SideView />
          </Frame>
        </TabPanel>
      </ControlPane>
      <ChartPane>
        <ToolbarEdge aria-hidden="true">
          <EdgeLine $width={38} />
          <EdgeSpace $width={110} />
          <EdgeLine $width={38} />
          <EdgeLine $width={16} $light />
          <EdgeLine $width={16} $light />
          <EdgeSpace $width={22} />
          <EdgeButton />
          <EdgeButton />
          <EdgeRule $width={0} />
        </ToolbarEdge>
        <SplChart />
        <CtaChart />
        <DirectivityChart />
      </ChartPane>
    </Page>
  );
}
